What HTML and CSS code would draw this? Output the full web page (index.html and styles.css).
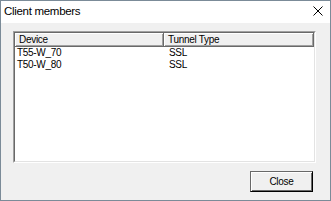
FILE: index.html
```html
<!DOCTYPE html>
<html lang="en">
<head>
  <meta charset="UTF-8" />
  <title>Client members</title>
  <link rel="stylesheet" href="styles.css">
</head>
<body>
  <div class="window">
    <!-- title bar -->
    <div class="titlebar">
      <span class="title">Client members</span>
      <svg class="close-x" width="10" height="10" viewBox="0 0 10 10">
        <path d="M0.5 0.5 L9.5 9.5 M9.5 0.5 L0.5 9.5" stroke="#000" stroke-width="1" fill="none"/>
      </svg>
    </div>

    <div class="content">
      <!-- list view -->
      <div class="listview">
        <div class="lv-inner">
          <div class="lv-header">
            <div class="hd-cell col-device">Device</div>
            <div class="hd-cell col-type">Tunnel Type</div>
          </div>
          <div class="lv-row">
            <div class="cell col-device">T55-W_70</div>
            <div class="cell col-type">SSL</div>
          </div>
          <div class="lv-row">
            <div class="cell col-device">T50-W_80</div>
            <div class="cell col-type">SSL</div>
          </div>
        </div>
      </div>

      <div class="buttons">
        <button class="btn">Close</button>
      </div>
    </div>
  </div>
</body>
</html>
```

FILE: styles.css
```css
html, body {
  margin: 0;
  padding: 0;
  background: #ffffff;
}
body {
  font-family: 'Liberation Sans', Arial, sans-serif;
  font-size: 10px;
  letter-spacing: -0.3px;
  color: #000;
}
.window {
  width: 331px;
  height: 201px;
  box-sizing: border-box;
  border: 1px solid #7b8b98;
  display: flex;
  flex-direction: column;
  background: #f0f0f0;
}
.titlebar {
  height: 22px;
  background: #fff;
  display: flex;
  align-items: center;
  justify-content: space-between;
  padding: 0 7px 0 3px;
}
.title {
  font-family: 'Liberation Sans', Arial, sans-serif;
  font-size: 11.5px;
  letter-spacing: -0.3px;
  margin-top: -2px;
}
.close-x {
  margin-top: -2px;
}
.content {
  flex: 1;
  display: flex;
  flex-direction: column;
  padding: 8px 14px 8px 12px;
}
.listview {
  height: 132px;
  box-sizing: border-box;
  border: 1px solid;
  border-color: #a0a0a0 #ffffff #ffffff #a0a0a0;
}
.lv-inner {
  height: 100%;
  box-sizing: border-box;
  border: 1px solid;
  border-color: #696969 #e3e3e3 #e3e3e3 #696969;
  background: #fff;
}
.lv-header {
  display: flex;
  height: 14px;
}
.hd-cell {
  box-sizing: border-box;
  height: 14px;
  line-height: 12px;
  padding: 1px 0 0 4px;
  background: #f0f0f0;
  border-right: 1px solid #696969;
  border-bottom: 1px solid #696969;
  box-shadow: inset 1px 1px 0 #fff, inset -1px -1px 0 #a0a0a0;
}
.col-device {
  width: 149px;
}
.col-type {
  width: 150px;
}
.lv-row {
  display: flex;
  height: 11.5px;
  line-height: 11.5px;
}
.lv-row:first-of-type {
  margin-top: 1px;
}
.cell {
  box-sizing: border-box;
  padding-left: 2px;
  white-space: nowrap;
}
.cell.col-type {
  padding-left: 5px;
}
.buttons {
  display: flex;
  justify-content: flex-end;
  margin-top: 8px;
}
.btn {
  width: 63px;
  height: 21px;
  margin-right: 3px;
  box-sizing: border-box;
  font-family: 'Liberation Sans', Arial, sans-serif;
  font-size: 10px;
  letter-spacing: -0.3px;
  color: #000;
  background: #f0f0f0;
  border: 1px solid;
  border-color: #696969 #000 #000 #696969;
  box-shadow: inset 1px 1px 0 #fff, inset -1px -1px 0 #696969;
  padding: 0;
}
```
